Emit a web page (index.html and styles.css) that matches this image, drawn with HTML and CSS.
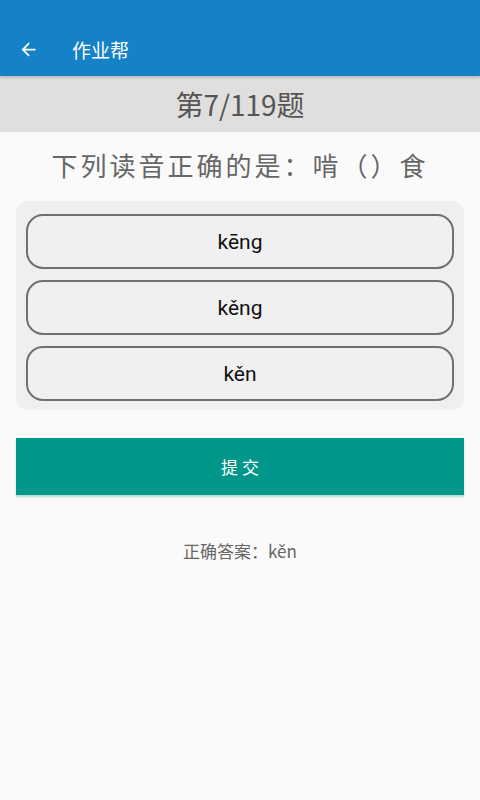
FILE: index.html
```html
<!DOCTYPE html>
<html lang="zh">
<head>
<meta charset="utf-8">
<link rel="stylesheet" href="styles.css">
</head>
<body>
<header class="appbar">
  <svg class="back" width="21" height="21" viewBox="0 0 24 24"><path d="M20 11H7.83l5.59-5.59L12 4l-8 8 8 8 1.41-1.41L7.83 13H20v-2z" fill="#fff"/></svg>
  <span class="apptitle">作业帮</span>
</header>
<div class="progress">第7/119题</div>
<main class="content">
  <div class="question">下列读音正确的是：啃（）食</div>
  <div class="options">
    <div class="option">kēng</div>
    <div class="option">kěng</div>
    <div class="option">kěn</div>
  </div>
  <div class="submit">提 交</div>
  <div class="answer">正确答案：kěn</div>
</main>
</body>
</html>
```
FILE: styles.css
```css
html, body { margin: 0; padding: 0; }
body {
  width: 480px;
  height: 800px;
  background: #fafafa;
  font-family: "Noto Sans CJK SC", "Noto Sans", Roboto, sans-serif;
  text-spacing-trim: space-all;
  overflow: hidden;
}
.appbar {
  height: 76px;
  background: #1581c6;
  display: flex;
  align-items: center;
  padding-top: 22px;
  box-sizing: border-box;
  position: relative;
  z-index: 1;
  box-shadow: 0 1px 3px rgba(0,0,0,0.25);
}
.back { margin-left: 18px; }
.apptitle {
  margin-left: 33px;
  color: #fff;
  font-size: 19px;
  font-weight: 400;
}
.progress {
  height: 56px;
  background: #e0dfde;
  color: #555;
  font-size: 28px;
  display: flex;
  align-items: center;
  justify-content: center;
}
.content {
  padding: 0 16px;
  display: flex;
  flex-direction: column;
}
.question {
  text-align: center;
  color: #666;
  font-size: 26px;
  line-height: 34px;
  margin-top: 16px;
  letter-spacing: 3px;
}
.options {
  margin-top: 19px;
  background: #efefef;
  border-radius: 12px;
  padding: 13px 10px 9px;
  display: flex;
  flex-direction: column;
  gap: 11px;
}
.option {
  height: 55px;
  box-sizing: border-box;
  border: 2px solid #707070;
  border-radius: 17px;
  background: #f0f0f0;
  display: flex;
  align-items: center;
  justify-content: center;
  color: #111;
  font-family: Roboto, "Noto Sans", sans-serif;
  font-size: 21px;
}
.submit {
  margin-top: 28px;
  height: 57px;
  background: #00968a;
  color: #fff;
  font-size: 17px;
  display: flex;
  align-items: center;
  justify-content: center;
  box-shadow: 0 2px 2px rgba(0,150,138,0.3);
}
.answer {
  margin-top: 43px;
  text-align: center;
  color: #666;
  font-size: 17px;
}
```
